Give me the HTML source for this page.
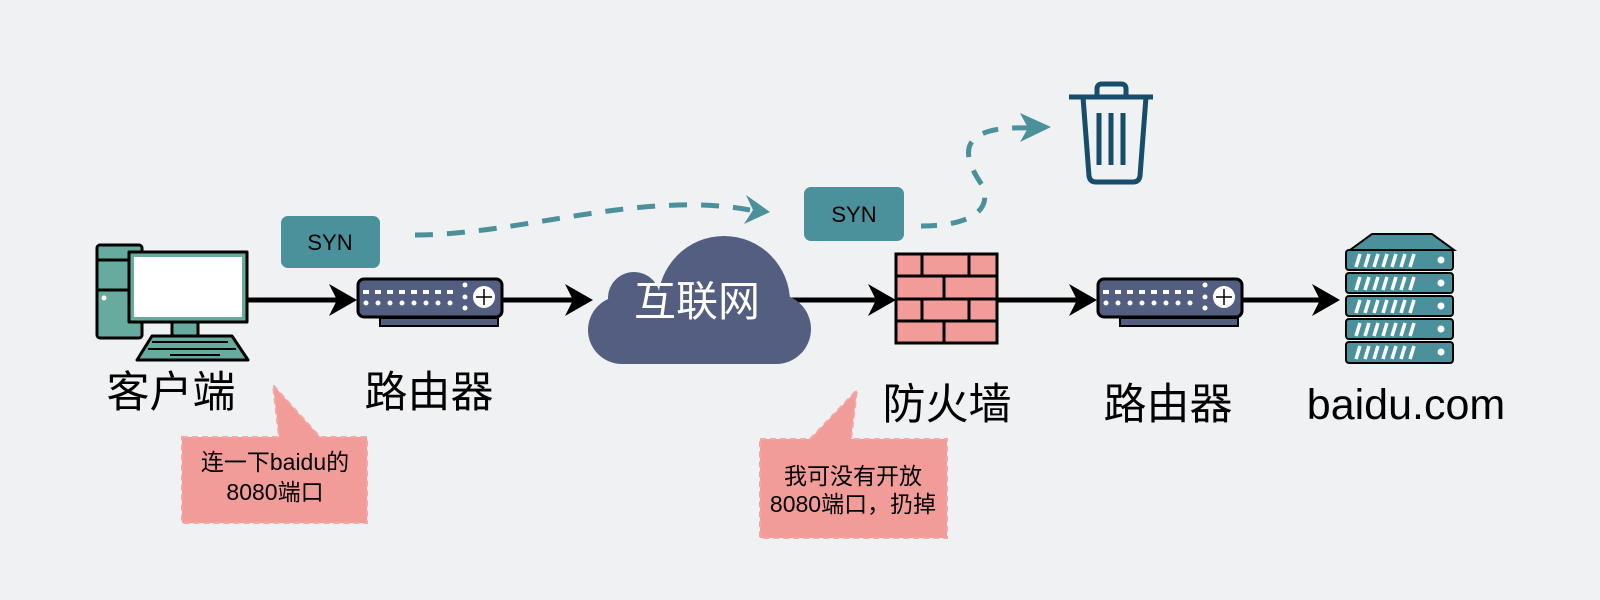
<!DOCTYPE html>
<html><head><meta charset="utf-8"><style>
body{margin:0;background:#f0f1f3;}
svg{display:block}
text{font-family:"Liberation Sans","Noto Sans CJK SC",sans-serif;}
</style></head><body>
<svg width="1600" height="600" viewBox="0 0 1600 600" xmlns="http://www.w3.org/2000/svg">
<defs><clipPath id="cc"><rect x="0" y="0" width="1600" height="364"/></clipPath></defs>
<rect width="1600" height="600" fill="#f0f1f3"/>
<g stroke="#000" stroke-width="5">
<line x1="247" y1="300" x2="340" y2="300"/>
<line x1="502" y1="300" x2="575" y2="300"/>
<line x1="790" y1="300" x2="880" y2="300"/>
<line x1="997" y1="300" x2="1082" y2="300"/>
<line x1="1242" y1="300" x2="1325" y2="300"/>
</g>
<g fill="#000">
<path d="M357 300 L329 284 L337 300 L329 316Z"/>
<path d="M593 300 L565 284 L573 300 L565 316Z"/>
<path d="M896 300 L868 284 L876 300 L868 316Z"/>
<path d="M1097 300 L1069 284 L1077 300 L1069 316Z"/>
<path d="M1340 300 L1312 284 L1320 300 L1312 316Z"/>
</g>
<g stroke="#000" stroke-width="3" stroke-linejoin="round">
<rect x="97" y="245" width="45" height="93" rx="3" fill="#67ab9f"/>
<line x1="97" y1="260" x2="129" y2="260"/>
<line x1="97" y1="290" x2="129" y2="290"/>
<rect x="172" y="320" width="26" height="16" fill="#67ab9f"/>
<path d="M137 360 L152 336 L232 336 L248 360Z" fill="#67ab9f"/>
<rect x="129" y="252" width="118" height="70" fill="#67ab9f"/>
<rect x="134" y="257" width="108" height="60" fill="#fff" stroke="none"/>
</g>
<circle cx="104" cy="298" r="2.5" fill="#fff"/>
<g stroke="#000" stroke-width="2"><line x1="152" y1="342" x2="228" y2="342"/><line x1="148" y1="349" x2="236" y2="349"/><line x1="170" y1="355" x2="220" y2="355"/></g>
<g id="r1">
<rect x="380" y="318" width="118" height="8" fill="#545e80" stroke="#000" stroke-width="2"/>
<rect x="358" y="279" width="144" height="38" rx="6" fill="#545e80" stroke="#000" stroke-width="3"/>
<g fill="#fff">
<rect x="363" y="290" width="6" height="4"/><rect x="375" y="290" width="6" height="4"/><rect x="387" y="290" width="6" height="4"/><rect x="399" y="290" width="6" height="4"/><rect x="411" y="290" width="6" height="4"/><rect x="423" y="290" width="6" height="4"/><rect x="435" y="290" width="6" height="4"/><rect x="447" y="290" width="6" height="4"/>
<circle cx="366" cy="303" r="2.5"/><circle cx="378" cy="303" r="2.5"/><circle cx="390" cy="303" r="2.5"/><circle cx="402" cy="303" r="2.5"/><circle cx="414" cy="303" r="2.5"/><circle cx="426" cy="303" r="2.5"/><circle cx="438" cy="303" r="2.5"/><circle cx="450" cy="303" r="2.5"/>
<circle cx="465" cy="285" r="2.5"/><circle cx="465" cy="297" r="2.5"/><circle cx="465" cy="308" r="2.5"/>
<circle cx="484" cy="297" r="11"/>
</g>
<path d="M484 289 V305 M476 297 H492" stroke="#000" stroke-width="1.5"/>
</g>
<use href="#r1" x="740" y="0"/>
<g fill="#545e80" clip-path="url(#cc)">
<circle cx="724" cy="302" r="66"/>
<circle cx="634" cy="298" r="26"/>
<circle cx="622" cy="330" r="34"/>
<circle cx="776" cy="329" r="35"/>
<rect x="622" y="300" width="154" height="64"/>
</g>
<text x="697" y="316" font-size="42" fill="#fff" text-anchor="middle">互联网</text>
<rect x="896" y="254" width="101" height="89" fill="#f19c99" stroke="#000" stroke-width="3"/>
<g stroke="#000" stroke-width="3" fill="none">
<line x1="896" y1="276" x2="997" y2="276"/><line x1="896" y1="299" x2="997" y2="299"/><line x1="896" y1="321" x2="997" y2="321"/>
<line x1="922" y1="254" x2="922" y2="276"/><line x1="969" y1="254" x2="969" y2="276"/>
<line x1="944" y1="276" x2="944" y2="299"/>
<line x1="922" y1="299" x2="922" y2="321"/><line x1="969" y1="299" x2="969" y2="321"/>
<line x1="944" y1="321" x2="944" y2="343"/>
</g>
<path d="M1350 250 L1372 234 L1432 234 L1454 250Z" fill="#4a919b" stroke="#000" stroke-width="2"/>
<g fill="#4a919b" stroke="#000" stroke-width="2">
<rect x="1346" y="250" width="107" height="20" rx="3"/>
<rect x="1346" y="273" width="107" height="20" rx="3"/>
<rect x="1346" y="296" width="107" height="20" rx="3"/>
<rect x="1346" y="319" width="107" height="20" rx="3"/>
<rect x="1346" y="342" width="107" height="21" rx="3"/>
</g>
<g stroke="#fff" stroke-width="3.5">
<path d="M1356 267 l4 -13 M1365 267 l4 -13 M1374 267 l4 -13 M1383 267 l4 -13 M1392 267 l4 -13 M1401 267 l4 -13 M1410 267 l4 -13"/>
<path d="M1356 290 l4 -13 M1365 290 l4 -13 M1374 290 l4 -13 M1383 290 l4 -13 M1392 290 l4 -13 M1401 290 l4 -13 M1410 290 l4 -13"/>
<path d="M1356 313 l4 -13 M1365 313 l4 -13 M1374 313 l4 -13 M1383 313 l4 -13 M1392 313 l4 -13 M1401 313 l4 -13 M1410 313 l4 -13"/>
<path d="M1356 336 l4 -13 M1365 336 l4 -13 M1374 336 l4 -13 M1383 336 l4 -13 M1392 336 l4 -13 M1401 336 l4 -13 M1410 336 l4 -13"/>
<path d="M1356 359 l4 -13 M1365 359 l4 -13 M1374 359 l4 -13 M1383 359 l4 -13 M1392 359 l4 -13 M1401 359 l4 -13 M1410 359 l4 -13"/>
</g>
<g fill="#fff"><circle cx="1441" cy="260" r="3.5"/><circle cx="1441" cy="283" r="3.5"/><circle cx="1441" cy="306" r="3.5"/><circle cx="1441" cy="329" r="3.5"/><circle cx="1441" cy="352" r="3.5"/></g>
<rect x="281" y="216" width="99" height="52" rx="7" fill="#4a919b"/>
<text x="330" y="250" font-size="22" text-anchor="middle">SYN</text>
<rect x="804" y="187" width="100" height="54" rx="7" fill="#4a919b"/>
<text x="854" y="222" font-size="22" text-anchor="middle">SYN</text>
<path d="M415 235 C520 235 640 190 750 210" fill="none" stroke="#4a919b" stroke-width="5" stroke-dasharray="18 14"/>
<path d="M770 212 L746 195 L753 210 L744 224Z" fill="#4a919b"/>
<path d="M921 226 C960 226 995 215 982 185 C965 160 950 125 1030 128" fill="none" stroke="#4a919b" stroke-width="5" stroke-dasharray="16 14"/>
<path d="M1051 127 L1020 113 L1028 128 L1020 142Z" fill="#4a919b"/>
<g fill="none" stroke="#164d6a" stroke-width="5">
<line x1="1069" y1="97" x2="1153" y2="97"/>
<path d="M1097 97 V89 Q1097 84 1102 84 H1121 Q1126 84 1126 89 V97"/>
<path d="M1083 97 L1089 176 Q1090 182 1096 182 H1133 Q1139 182 1140 176 L1146 97"/>
<line x1="1099" y1="113" x2="1099" y2="165"/><line x1="1111" y1="113" x2="1111" y2="165"/><line x1="1123" y1="113" x2="1123" y2="165"/>
</g>
<g font-size="43" text-anchor="middle" fill="#000">
<text x="171" y="407">客户端</text>
<text x="429" y="407">路由器</text>
<text x="947" y="419">防火墙</text>
<text x="1168" y="419">路由器</text>
<text x="1406" y="419">baidu.com</text>
</g>
<path d="M182 437 H279 L273 385 L320 437 H367 V523 H182Z" fill="#f19c99" stroke="#f4a7a5" stroke-width="2" stroke-dasharray="6 4"/>
<text x="275" y="470" font-size="23" text-anchor="middle">连一下baidu的</text>
<text x="275" y="500" font-size="23" text-anchor="middle">8080端口</text>
<path d="M760 439 H810 L857 390 L851 439 H947 V538 H760Z" fill="#f19c99" stroke="#f4a7a5" stroke-width="2" stroke-dasharray="6 4"/>
<text x="853" y="484" font-size="23" text-anchor="middle">我可没有开放</text>
<text x="853" y="512" font-size="23" text-anchor="middle">8080端口，扔掉</text>
</svg>
</body></html>
